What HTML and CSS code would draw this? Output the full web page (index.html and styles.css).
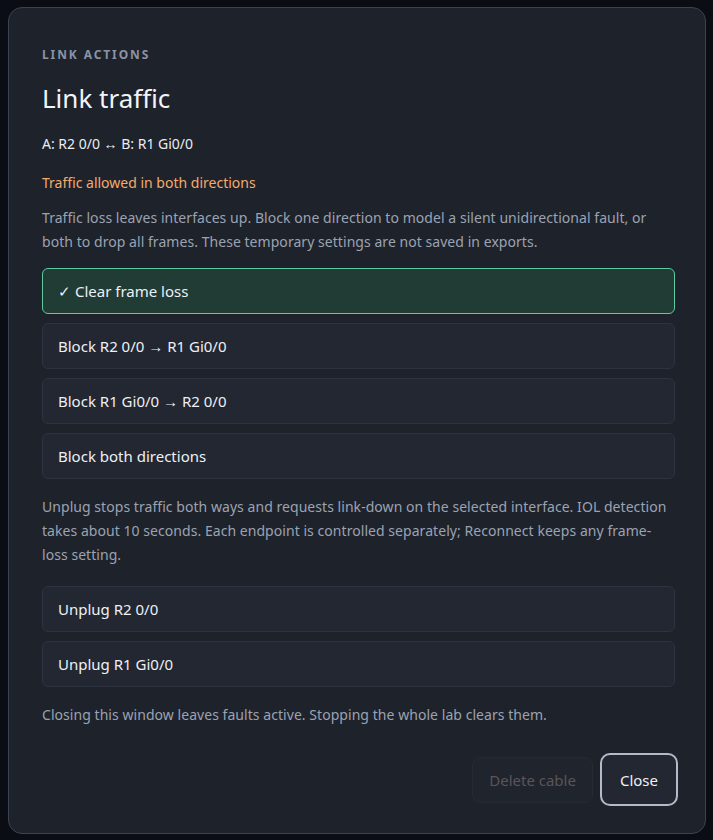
FILE: index.html
```html
<!DOCTYPE html>
<html lang="en">
<head>
<meta charset="utf-8">
<title>Link traffic</title>
<link rel="stylesheet" href="styles.css">
</head>
<body>
<div class="backdrop">
  <section class="modal">
    <div class="eyebrow">Link actions</div>
    <h1 class="title">Link traffic</h1>
    <div class="endpoints">A: R2 0/0 ↔ B: R1 Gi0/0</div>
    <div class="status">Traffic allowed in both directions</div>
    <p class="note">Traffic loss leaves interfaces up. Block one direction to model a silent unidirectional fault, or both to drop all frames. These temporary settings are not saved in exports.</p>
    <div class="options">
      <button class="opt opt-active">✓ Clear frame loss</button>
      <button class="opt">Block R2 0/0 → R1 Gi0/0</button>
      <button class="opt">Block R1 Gi0/0 → R2 0/0</button>
      <button class="opt">Block both directions</button>
    </div>
    <p class="note note-unplug">Unplug stops traffic both ways and requests link-down on the selected interface. IOL detection takes about 10 seconds. Each endpoint is controlled separately; Reconnect keeps any frame-loss setting.</p>
    <div class="options options-unplug">
      <button class="opt">Unplug R2 0/0</button>
      <button class="opt">Unplug R1 Gi0/0</button>
    </div>
    <p class="note note-close">Closing this window leaves faults active. Stopping the whole lab clears them.</p>
    <div class="footer">
      <button class="btn btn-danger" disabled>Delete cable</button>
      <button class="btn btn-close">Close</button>
    </div>
  </section>
</div>
</body>
</html>
```
FILE: styles.css
```css
* { box-sizing: border-box; }
html, body { margin: 0; padding: 0; }
body {
  background: #0a0d14;
  font-family: "Noto Sans", "Open Sans", sans-serif;
  color: #e6e9ef;
  width: 713px;
  height: 840px;
  overflow: hidden;
}
.backdrop {
  padding: 7px 7px 6px 8px;
  height: 840px;
}
.modal {
  background: #1e222b;
  border: 1px solid #3b4252;
  border-radius: 14px;
  padding: 33px 30px 27px 33px;
  height: 827px;
  display: flex;
  flex-direction: column;
}
.eyebrow {
  font-size: 12px;
  font-weight: 700;
  letter-spacing: 1.9px;
  text-transform: uppercase;
  color: #8b93a4;
  line-height: 16px;
  margin-top: 6px;
}
.title {
  margin: 18px 0 0;
  font-size: 26px;
  font-weight: 400;
  line-height: 34px;
  color: #f2f4f8;
}
.endpoints {
  margin-top: 19px;
  font-size: 14px;
  line-height: 20px;
  color: #e9ecf1;
}
.status {
  margin-top: 19px;
  font-size: 14px;
  line-height: 20px;
  color: #f3aa6c;
}
.note {
  margin: 13px 0 0;
  font-size: 14px;
  line-height: 24px;
  letter-spacing: 0.05px;
  color: #9ba3b2;
}
.options {
  margin-top: 14px;
  display: flex;
  flex-direction: column;
  gap: 9px;
}
.opt {
  height: 46px;
  width: 100%;
  text-align: left;
  padding: 0 15px;
  background: #222731;
  border: 1px solid #2d3340;
  border-radius: 6px;
  font-family: inherit;
  font-size: 15px;
  color: #edf0f5;
}
.opt-active {
  background: #213b35;
  border-color: #5fc9a1;
}
.note-unplug { margin-top: 16px; }
.options-unplug { margin-top: 19px; }
.note-close { margin-top: 16px; }
.footer {
  margin-top: auto;
  margin-right: -3px;
  display: flex;
  justify-content: flex-end;
  align-items: center;
  gap: 7px;
}
.btn {
  font-family: inherit;
  font-size: 15px;
  border-radius: 8px;
}
.btn-danger {
  height: 46px;
  padding: 0 16px;
  background: #20242d;
  border: 1px solid #252a33;
  color: #5c5459;
}
.btn-close {
  height: 53px;
  padding: 0 18px;
  background: #222731;
  border: 2px solid #b3bac8;
  border-radius: 10px;
  color: #eef1f6;
}
```
